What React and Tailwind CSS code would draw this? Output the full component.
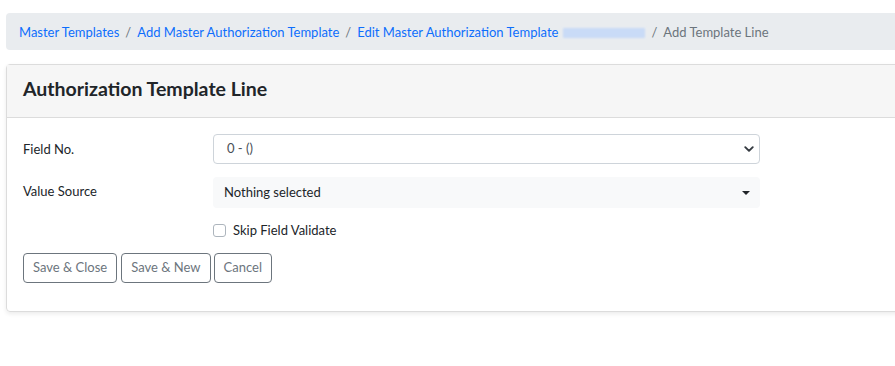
import React from "react";

const crumbs = [
  "Master Templates",
  "Add Master Authorization Template",
  "Edit Master Authorization Template",
];

const Sep = () => <span className="px-[6px] text-[#6c757d]">/</span>;

const App = () => {
  return (
    <div
      className="min-h-screen bg-white pl-[6px] pt-[13px] text-[13px] text-[#212529] overflow-hidden"
      style={{ fontFamily: 'Lato, "Noto Sans", sans-serif' }}
    >
      {/* Breadcrumb */}
      <div className="h-[37px] w-[900px] flex items-center pl-[13px] pt-[2px] bg-[#e9ecef] rounded-l">
        {crumbs.map((c, i) => (
          <React.Fragment key={c}>
            {i > 0 && <Sep />}
            <span className="text-[#0d6efd]">{c}</span>
          </React.Fragment>
        ))}
        <span className="ml-[5px] inline-flex items-center h-[10px] w-[82px] bg-[#bcd4fb] opacity-70 blur-[1px]" />
        <Sep />
        <span className="text-[#6c757d]">Add Template Line</span>
      </div>

      {/* Card */}
      <div className="mt-[14px] w-[900px] border border-[#dcdcdc] rounded-l shadow-[0_2px_4px_rgba(0,0,0,0.08)]">
        <div className="h-[53px] flex items-center px-4 pb-[5px] bg-[#f6f6f6] border-b border-[#dcdcdc]">
          <h2 className="text-[19.5px] font-bold text-[#212529]">Authorization Template Line</h2>
        </div>
        <div className="px-4 pt-4 pb-[28px]">
          <div className="flex items-center">
            <label className="w-[190px] mt-[1px]">Field No.</label>
            <div className="w-[547px] h-[30px] flex items-center justify-between pl-[13px] pr-[5px] border border-[#ced4da] rounded">
              <span className="text-[#495057]">0 - ()</span>
              <svg width="10" height="10" viewBox="0 0 16 16" fill="none">
                <path d="M2 5l6 6 6-6" stroke="#343a40" strokeWidth="3" strokeLinecap="round" strokeLinejoin="round" />
              </svg>
            </div>
          </div>

          <div className="flex items-center mt-[13px]">
            <label className="w-[190px] -mt-[2px]">Value Source</label>
            <div className="w-[547px] h-[31px] flex items-center justify-between pl-[11px] pr-[10px] bg-[#f8f9fa] rounded">
              <span>Nothing selected</span>
              <span className="w-0 h-0 border-l-[4px] border-r-[4px] border-t-[4px] border-l-transparent border-r-transparent border-t-[#212529]" />
            </div>
          </div>

          <div className="flex items-center mt-[13px] ml-[190px]">
            <span className="w-[13px] h-[13px] border border-[#adb5bd] rounded-[3px] bg-white" />
            <span className="ml-[7px]">Skip Field Validate</span>
          </div>

          <div className="flex mt-[12px]">
            <button className="h-[30px] px-[9px] border border-[#6c757d] rounded text-[#6c757d]">Save &amp; Close</button>
            <button className="h-[30px] ml-1 px-[9px] border border-[#6c757d] rounded text-[#6c757d]">Save &amp; New</button>
            <button className="h-[30px] ml-[3px] px-[9px] border border-[#6c757d] rounded text-[#6c757d]">Cancel</button>
          </div>
        </div>
      </div>
    </div>
  );
};

export default App;
